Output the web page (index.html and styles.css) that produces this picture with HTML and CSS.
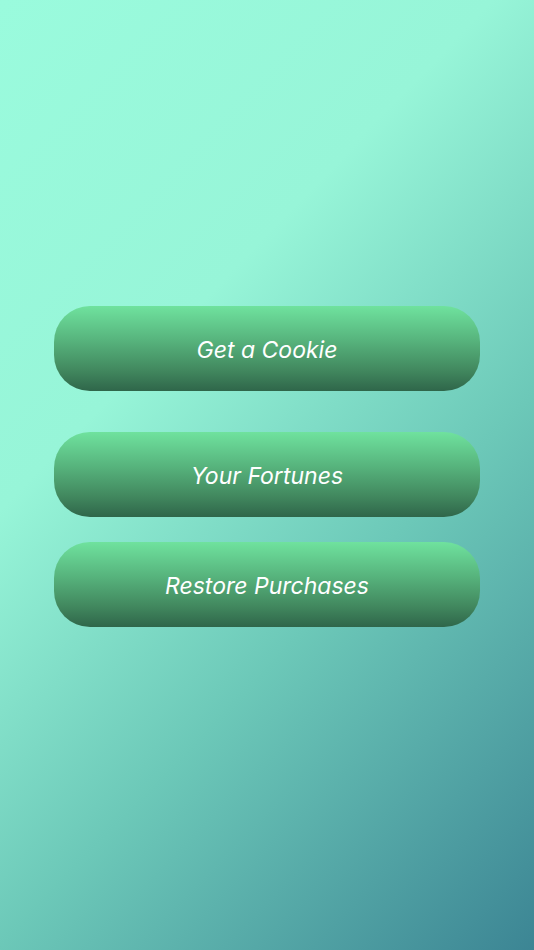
FILE: index.html
```html
<!DOCTYPE html>
<html lang="en">
<head>
<meta charset="utf-8">
<title>Fortune Cookie</title>
<link rel="stylesheet" href="styles.css">
</head>
<body>
<main class="screen">
  <nav class="menu">
    <button class="pill pill-first">Get a Cookie</button>
    <button class="pill pill-second">Your Fortunes</button>
    <button class="pill pill-third">Restore Purchases</button>
  </nav>
</main>
</body>
</html>
```

FILE: styles.css
```css
html, body {
  margin: 0;
  padding: 0;
}

body {
  width: 534px;
  height: 950px;
  overflow: hidden;
  font-family: Inter, "Noto Sans", "Liberation Sans", sans-serif;
}

.screen {
  box-sizing: border-box;
  width: 534px;
  height: 950px;
  padding: 306px 54px 0 54px;
  background: linear-gradient(134deg, #9afbdd 0%, #97f5d8 34%, #6cc8b8 63%, #3c8594 100%);
}

.menu {
  display: flex;
  flex-direction: column;
}

.pill {
  box-sizing: border-box;
  display: flex;
  align-items: center;
  justify-content: center;
  width: 426px;
  height: 85px;
  margin: 0;
  padding: 2px 0 0 0;
  border: none;
  border-radius: 36px;
  background: linear-gradient(180deg, #6fe29e 0%, #57b47d 40%, #42895f 75%, #2f664a 100%);
  color: #ffffff;
  font-family: Inter, "Noto Sans", "Liberation Sans", sans-serif;
  font-size: 23px;
  font-style: italic;
  font-weight: 400;
  letter-spacing: 0;
}

.pill-second {
  margin-top: 41px;
}

.pill-third {
  margin-top: 25px;
}
```
